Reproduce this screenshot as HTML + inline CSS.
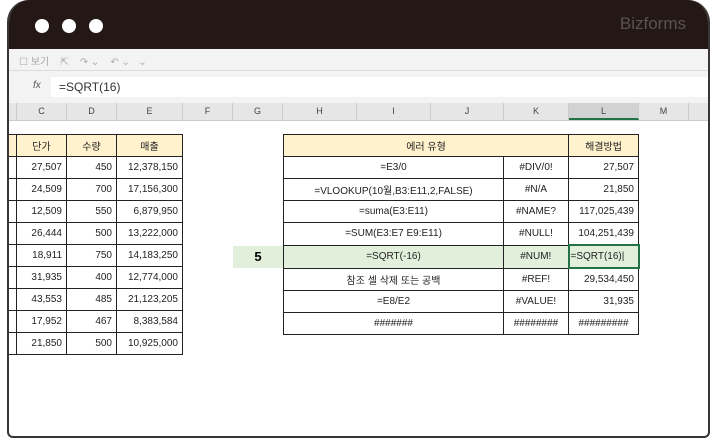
<!DOCTYPE html><html><head><meta charset="utf-8"><style>
body{margin:0;width:715px;height:440px;background:#fff;position:relative;overflow:hidden;font-family:"Liberation Sans","Noto Sans CJK KR",sans-serif}
.win{position:absolute;left:7px;top:0;width:699px;height:436px;border:2px solid #3a3535;border-top:none;border-radius:22px 22px 6px 6px;overflow:hidden;background:#fff}
.title{position:absolute;left:0;top:0;right:0;height:49px;background:#231815}
.dot{position:absolute;top:19px;width:14px;height:14px;border-radius:50%;background:#fff}
.biz{position:absolute;right:22px;top:14px;color:#5a5350;font-size:17px}
.tb{position:absolute;left:0;right:0;top:49px;height:21px;background:#f3f3f3;border-bottom:1px solid #ddd;font-size:10px;color:#aaa}
.fb{position:absolute;left:0;right:0;top:71px;height:32px;background:#f3f3f3}
.fin{position:absolute;left:42px;top:6px;right:0;height:20px;background:#fff;font-size:12px;line-height:20px;padding-left:8px;color:#333}
.hdr{position:absolute;left:0;right:0;top:103px;height:17px;background:#e6e6e6;border-bottom:1px solid #ccc}
.h{position:absolute;top:0;height:17px;font-size:9px;color:#444;text-align:center;line-height:17px;border-right:1px solid #ccc}
table{position:absolute;border-collapse:collapse;font-size:10px;color:#222}
td{border:1px solid #222;height:21px;padding:0 4px;white-space:nowrap}
.y td{background:#fff2cc}
</style></head><body><div class="win">
<div class="title"><div class="dot" style="left:26px"></div><div class="dot" style="left:53px"></div><div class="dot" style="left:80px"></div><div class="biz">Bizforms</div></div>
<div class="tb"><span style="position:absolute;left:10px;top:4px">☐ 보기 &nbsp;&nbsp; ⇱ &nbsp;&nbsp; ↷ ⌄ &nbsp;&nbsp; ↶ ⌄ &nbsp; ⌄</span></div>
<div class="fb"><span style="position:absolute;left:24px;top:9px;font-size:10px;font-style:italic;color:#555">fx</span><div class="fin">=SQRT(16)</div></div>
<div class="hdr">
<div class="h" style="left:-2px;width:9px"></div>
<div class="h" style="left:8px;width:49px">C</div><div class="h" style="left:58px;width:49px">D</div><div class="h" style="left:108px;width:65px">E</div><div class="h" style="left:174px;width:49px">F</div><div class="h" style="left:224px;width:49px">G</div><div class="h" style="left:274px;width:73px">H</div><div class="h" style="left:348px;width:73px">I</div><div class="h" style="left:422px;width:72px">J</div><div class="h" style="left:495px;width:64px">K</div><div class="h" style="left:560px;width:69px;background:#d2d2d2;border-bottom:2px solid #217346;height:15px">L</div><div class="h" style="left:630px;width:49px">M</div></div>
<div style="position:absolute;left:224px;top:246px;width:50px;height:22px;background:#e2efda;font-weight:bold;font-size:13px;line-height:22px;text-align:center">5</div>
<table style="left:-10px;top:134px;text-align:right">
<tr class="y"><td style="width:8px"></td><td style="width:41px;text-align:center">단가</td><td style="width:41px;text-align:center">수량</td><td style="width:57px;text-align:center">매출</td></tr>
<tr><td></td><td>27,507</td><td>450</td><td>12,378,150</td></tr>
<tr><td></td><td>24,509</td><td>700</td><td>17,156,300</td></tr>
<tr><td></td><td>12,509</td><td>550</td><td>6,879,950</td></tr>
<tr><td></td><td>26,444</td><td>500</td><td>13,222,000</td></tr>
<tr><td></td><td>18,911</td><td>750</td><td>14,183,250</td></tr>
<tr><td></td><td>31,935</td><td>400</td><td>12,774,000</td></tr>
<tr><td></td><td>43,553</td><td>485</td><td>21,123,205</td></tr>
<tr><td></td><td>17,952</td><td>467</td><td>8,383,584</td></tr>
<tr><td></td><td>21,850</td><td>500</td><td>10,925,000</td></tr>
</table>
<table style="left:274px;top:134px;text-align:center">
<tr class="y"><td colspan="2" style="width:276px">에러 유형</td><td style="width:61px">해결방법</td></tr>
<tr><td style="width:211px">=E3/0</td><td style="width:56px">#DIV/0!</td><td style="text-align:right">27,507</td></tr>
<tr><td>=VLOOKUP(10월,B3:E11,2,FALSE)</td><td>#N/A</td><td style="text-align:right">21,850</td></tr>
<tr><td>=suma(E3:E11)</td><td>#NAME?</td><td style="text-align:right">117,025,439</td></tr>
<tr><td>=SUM(E3:E7 E9:E11)</td><td>#NULL!</td><td style="text-align:right">104,251,439</td></tr>
<tr style="background:#e2efda"><td>=SQRT(-16)</td><td>#NUM!</td><td style="text-align:left;padding:0 1px;border:2px solid #217346;background:#e2efda">=SQRT(16)|</td></tr>
<tr><td>참조 셀 삭제 또는 공백</td><td>#REF!</td><td style="text-align:right">29,534,450</td></tr>
<tr><td>=E8/E2</td><td>#VALUE!</td><td style="text-align:right">31,935</td></tr>
<tr><td>#######</td><td>########</td><td>#########</td></tr>
</table>
</div></body></html>
